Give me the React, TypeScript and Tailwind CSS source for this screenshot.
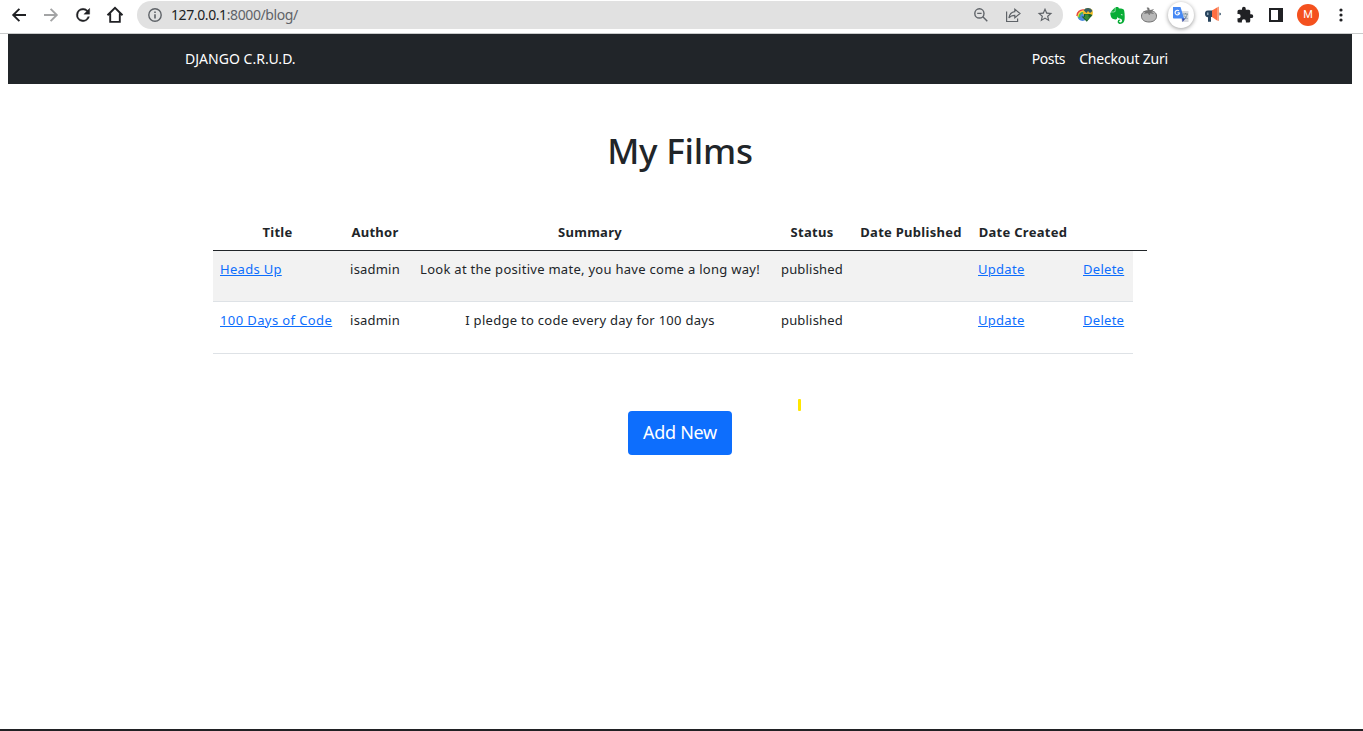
import React from "react";
import { SiEvernote } from "react-icons/si";

const columns =
  "grid grid-cols-[127px_70px_360px_83px_117px_106px_57px] text-center";

const films = [
  {
    title: "Heads Up",
    titleClass: "tracking-[0.3px]",
    author: "isadmin",
    summary: "Look at the positive mate, you have come a long way!",
    status: "published",
    rowClass: "h-[51px] bg-[#f2f2f2]",
  },
  {
    title: "100 Days of Code",
    titleClass: "tracking-[0.4px]",
    author: "isadmin",
    summary: "I pledge to code every day for 100 days",
    status: "published",
    rowClass: "h-[52px]",
  },
];

function Arrow({ flip = false }: { flip?: boolean }) {
  return (
    <svg
      viewBox="0 0 16 16"
      className={flip ? "size-4 rotate-180 text-[#a3a4a5]" : "size-4 text-[#202124]"}
      fill="none"
      stroke="currentColor"
      strokeWidth="1.9"
    >
      <path d="M15 8H2.5M8.4 1.8 2.2 8l6.2 6.2" />
    </svg>
  );
}

function Toolbar() {
  return (
    <div className="flex h-[34px] items-start border-b border-[#c9cbcb] bg-white">
      <div className="flex h-[30px] w-[137px] items-center gap-4 pl-[11px]">
        <Arrow />
        <Arrow flip />
        <svg viewBox="0 0 24 24" className="-ml-0.5 h-5 w-5 shrink-0 fill-[#202124] stroke-[#202124] stroke-[0.4]">
          <path d="M17.65 6.35A7.96 7.96 0 0 0 12 4a8 8 0 1 0 7.73 10h-2.08A6 6 0 1 1 12 6c1.66 0 3.14.69 4.22 1.78L13 11h7V4z" />
        </svg>
        <svg viewBox="0 0 18 18" className="-ml-[3px] size-[18px] shrink-0" fill="none" stroke="#202124" strokeWidth="1.9">
          <path d="M1.5 9.2 9 1.9l7.500 7.300M4.200 7.500v8.400h9.600V7.500" />
        </svg>
      </div>
      <div className="mt-px flex h-7 w-[926px] items-center rounded-full bg-[#e1e1e1] pl-[11px] pr-[10px]">
        <svg viewBox="0 0 14 14" className="mr-[9px] size-3.5" fill="none" stroke="#5f6368" strokeWidth="1.4">
          <circle cx="7" cy="7" r="6.2" />
          <path d="M7 6.200v4.300M7 3.400v1.500" strokeWidth="1.6" />
        </svg>
        <span className="flex-1 text-[14px] leading-none tracking-[-0.4px] text-[#5f6368]">
          <span className="text-[#202124]">127.0.0.1</span>:8000/blog/
        </span>
        <div className="flex items-center gap-4 text-[#5f6368]">
          <svg viewBox="0 0 16 16" className="size-4" fill="none" stroke="currentColor" strokeWidth="1.4">
            <circle cx="6.400" cy="6.400" r="4.600" />
            <path d="m9.800 9.800 4.500 4.500M4.200 6.400h4.400" />
          </svg>
          <svg viewBox="0 0 16 16" className="size-4" fill="none" stroke="currentColor" strokeWidth="1.2">
            <path d="M1.600 4.500v10h11v-3M9.800 2.200 15 6.500l-5.200 4.300V8.300C7.200 8.300 5.400 9 3.900 11c.5-3.300 2.500-6 5.900-6.400z" />
          </svg>
          <svg viewBox="0 0 24 24" className="size-4 scale-110 fill-current">
            <path d="m22 9.240-7.190-.62L12 2 9.190 8.630 2 9.240l5.460 4.730L5.820 21 12 17.270 18.180 21l-1.630-7.030zM12 15.400l-3.760 2.270 1-4.280-3.320-2.880 4.380-.38L12 6.100l1.710 4.040 4.380.38-3.320 2.880 1 4.280z" />
          </svg>
        </div>
      </div>
      <div className="flex h-[30px] flex-1 items-center pl-[13px]">
        <div className="flex w-8 shrink-0">
          <svg viewBox="0 0 18 18" className="size-[18px]">
            <circle cx="6.500" cy="10" r="5" fill="#4d8be0" />
            <path d="M1 10a6 6 0 0 1 7-6" fill="none" stroke="#e9453b" strokeWidth="1.5" />
            <path d="M2.200 11a5 5 0 0 1 6-5.500" fill="none" stroke="#ffd936" strokeWidth="1.5" />
            <path d="M3.500 12a4 4 0 0 1 5-5" fill="none" stroke="#45bb55" strokeWidth="1.500" />
            <circle cx="12" cy="6.800" r="4.900" fill="#f2be24" />
            <path d="M7.700 4.300A5 5 0 0 1 16.500 5L14 7l-2-2-1.500 2z" fill="#365f63" />
            <path d="M8 8h6l2.500 1-5.700 6.700L5.500 10.500H8z" fill="#17602c" />
            <path d="M9 8.500h3.500v2.300h1.700l-3.300 3.700L7.500 11H9z" fill="#388b35" />
          </svg>
        </div>
        <div className="flex w-8 shrink-0">
          <SiEvernote className="ml-px size-[17px] text-[#08ad36]" />
        </div>
        <div className="flex w-8 shrink-0">
          <svg viewBox="0 0 18 18" className="size-[18px]" stroke="#717171">
            <path d="M9 4.700c5 0 7.500 2 7.500 5.500S13.500 16 9 16s-7.500-2.300-7.500-5.800S4 4.700 9 4.700z" fill="#b8b8b8" />
            <path d="M8.300 5 7 1.700l2 .4.500 2.400 4-1-2.700 2.500 2.800 1.500-3.800-.5-.3 2-1.700-2.100L4.500 7.500l1.200-1.500-2-.5z" fill="#777" strokeWidth=".5" />
          </svg>
        </div>
        <div className="-ml-[4px] mr-1 flex size-[26px] shrink-0 items-center justify-center rounded-full bg-white shadow-[0_1px_4px_rgba(0,0,0,0.4)]">
          <svg viewBox="0 0 18 18" className="size-[18px]">
            <path d="M7 5h9.500v11H10z" fill="#d9dbe0" />
            <path d="M10 12h4L10.500 16z" fill="#344ba9" />
            <path d="M1 1h7.500l3.600 11.500H2c-.7 0-1-.4-1-1z" fill="#4789f4" />
            <path d="M7.700 6.800H5.500M7 4.900a2.300 2.300 0 1 0 .7 1.900" fill="none" stroke="white" strokeWidth="1.200" />
            <path d="M11 8h5M13.500 7v1M15.200 8c-.5 2.500-1.700 4-3.200 5M12 9.500l3.500 3.500" fill="none" stroke="#78909c" strokeWidth=".9" />
          </svg>
        </div>
        <div className="ml-[6px] flex w-8 shrink-0">
          <svg viewBox="0 0 18 18" className="size-[18px]">
            <path d="M9 4.500H4C1.500 4.500 1 6 1 7.900s1 3.300 3 3.300v4.600h3V11h2z" fill="#28445d" />
            <path d="M3 6.500h1.500V9H3z" fill="#91aabd" />
            <path d="M8 4.500 13 1.500v13L8 11z" fill="#ff6e42" />
            <path d="m13 1.500 2-1v14.500l-2-.5z" fill="#f99a78" />
            <path d="M15.500 6.500c1.800 0 1.800 3 0 3z" fill="#28445d" />
          </svg>
        </div>
        <div className="flex w-8 shrink-0">
          <svg viewBox="0 0 24 24" className="size-[18px] fill-[#202124]">
            <path d="M20.500 11H19V7a2 2 0 0 0-2-2h-4V3.500a2.500 2.500 0 0 0-5 0V5H4a2 2 0 0 0-2 2v3.800h1.500a2.700 2.700 0 0 1 0 5.400H2V20a2 2 0 0 0 2 2h3.800v-1.500a2.700 2.700 0 0 1 5.400 0V22H17a2 2 0 0 0 2-2v-4h1.500a2.500 2.500 0 0 0 0-5z" />
          </svg>
        </div>
        <div className="flex w-[32px] shrink-0">
          <svg viewBox="0 0 14 14" className="ml-px size-3.5">
            <path d="M1 1h12v12H1z" fill="white" stroke="#202124" strokeWidth="2" />
            <path d="M9 0h5v14H9z" fill="#202124" />
          </svg>
        </div>
        <div className="-ml-[3px] flex size-[22px] shrink-0 items-center justify-center rounded-full bg-[#f4511e] font-[Roboto,sans-serif] text-[11px] text-white">M</div>
        <svg viewBox="0 0 4 14" className="ml-[20px] h-3.5 w-1 shrink-0 fill-[#202124]">
          <circle cx="2" cy="2" r="1.600" />
          <circle cx="2" cy="7" r="1.600" />
          <circle cx="2" cy="12" r="1.600" />
        </svg>
      </div>
    </div>
  );
}

export default function App() {
  return (
    <div className="flex h-[731px] w-[1363px] flex-col overflow-hidden border-b-2 border-[#202124] bg-white font-['Noto_Sans',sans-serif] text-[#212529]">
      <Toolbar />
      <nav className="ml-2 mr-[11px] flex h-[50px] shrink-0 items-center bg-[#212529] pb-px pl-[177px] pr-[184px] text-[14px] text-white">
        <a className="tracking-[0.02px]">DJANGO C.R.U.D.</a>
        <a className="ml-auto tracking-[-0.4px]">Posts</a>
        <a className="ml-3.5 tracking-[-0.2px]">Checkout Zuri</a>
      </nav>
      <main className="flex w-[1360px] flex-col items-center">
        <h1 className="mt-[44px] text-[35px] font-medium leading-[46px] tracking-[-0.2px]">My Films</h1>
        <div className="mt-[40px] w-[934px] text-[13px] leading-5 tracking-[0.28px]">
          <div className={`${columns} h-[37px] border-b border-[#212529] pt-[8px] font-bold`}>
            <span className="pl-[2px]">Title</span>
            <span>Author</span>
            <span>Summary</span>
            <span className="pl-px">Status</span>
            <span className="whitespace-nowrap pr-px">Date Published</span>
            <span className="whitespace-nowrap">Date Created</span>
          </div>
          {films.map((film) => (
            <div key={film.title} className={`${columns} ${film.rowClass} w-[920px] border-b border-[#dee2e6] pt-[8px]`}>
              <a className={`${film.titleClass} whitespace-nowrap pl-[7px] text-left text-[#0d6efd] underline`}>{film.title}</a>
              <span className="tracking-[0.2px]">{film.author}</span>
              <span className="whitespace-nowrap">{film.summary}</span>
              <span className="pl-px tracking-[0.2px]">{film.status}</span>
              <span />
              <a className="pl-[8px] text-left text-[#0d6efd] underline">Update</a>
              <a className="pl-[7px] text-left text-[#0d6efd] underline">Delete</a>
            </div>
          ))}
        </div>
        <div className="relative mt-[57px]">
          <button className="h-11 w-[104px] rounded-[4px] bg-[#0d6efd] pb-0.5 text-[18px] tracking-[-0.3px] text-white">Add New</button>
          <span className="absolute -top-[12px] left-[170px] h-3 w-[3px] rounded-[1px] bg-[#ffe600]" />
        </div>
      </main>
    </div>
  );
}
